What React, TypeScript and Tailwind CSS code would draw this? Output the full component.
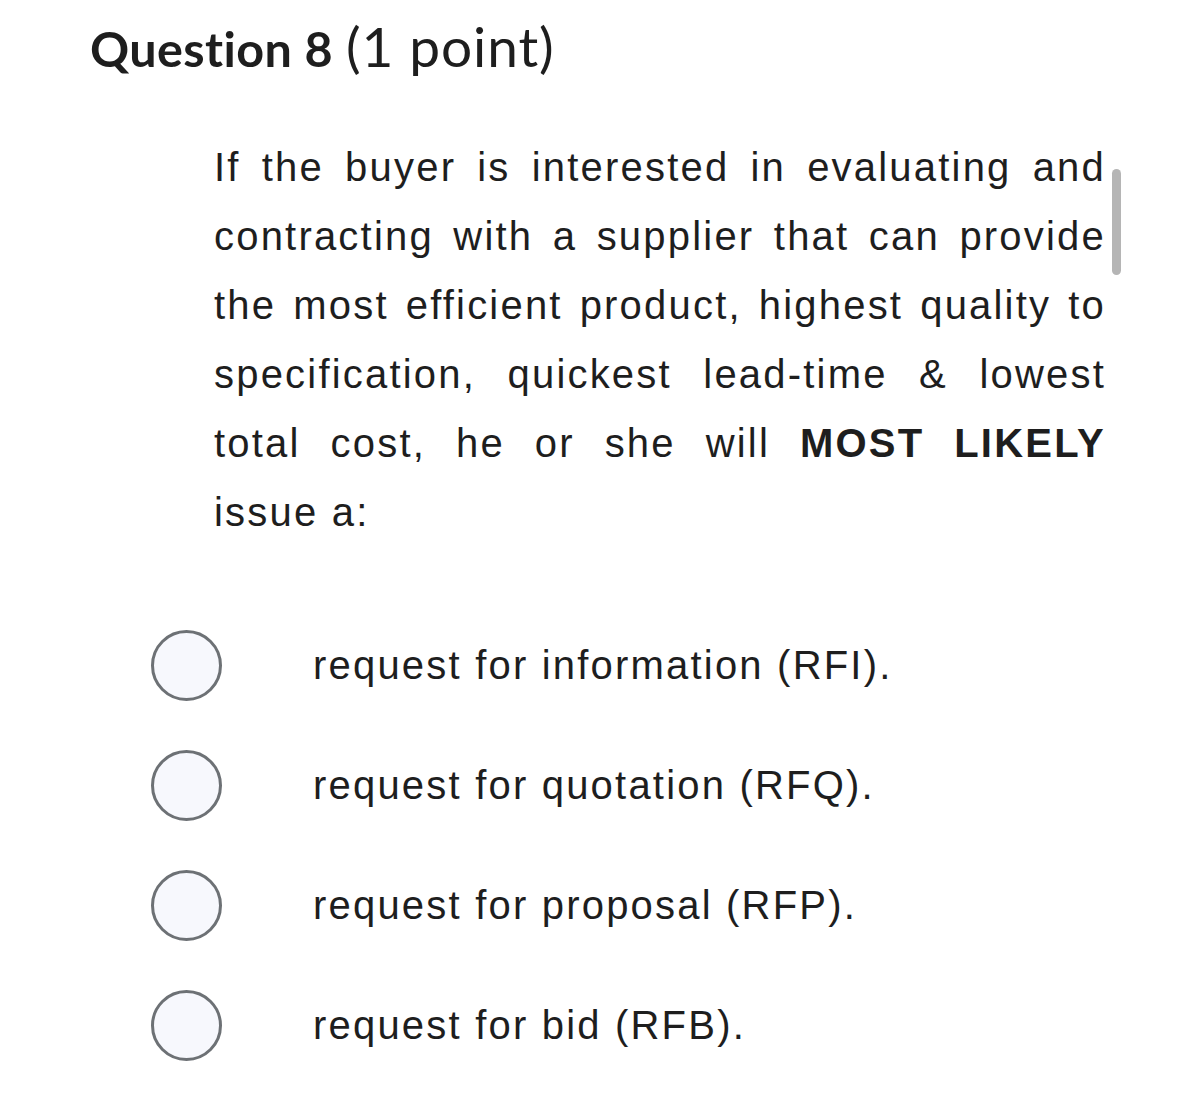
import React from "react";

const lines = [
  "If the buyer is interested in evaluating and",
  "contracting with a supplier that can provide",
  "the most efficient product, highest quality to",
  "specification, quickest lead-time & lowest",
];

const options = [
  "request for information (RFI).",
  "request for quotation (RFQ).",
  "request for proposal (RFP).",
  "request for bid (RFB).",
];

export default function App() {
  return (
    <div className="relative w-[1179px] h-[1116px] bg-white overflow-hidden text-[#1e1e1e]">
      <div className="pl-[90px] pt-[14px] h-[72px] font-['Lato',sans-serif] leading-[64px] whitespace-nowrap">
        <span className="font-bold text-[48.5px] tracking-[0.4px]">Question 8</span>
        <span className="font-normal text-[55px] ml-[13px] tracking-[0.9px]">(1 point)</span>
      </div>

      <div className="relative ml-[214px] mt-[61px] w-[892px] font-['Liberation_Sans',Arial,sans-serif] text-[40px] leading-[69px] tracking-[2.2px]">
        {lines.map((l) => (
          <div key={l} className="text-justify [text-align-last:justify]">
            {l}
          </div>
        ))}
        <div className="text-justify [text-align-last:justify]">
          total cost, he or she will <span className="font-bold">MOST LIKELY</span>
        </div>
        <div>issue a:</div>
        <div className="absolute left-[898px] top-[36px] w-[9px] h-[106px] rounded-full bg-[#b5b5b5]" />
      </div>

      <div className="mt-[58px] flex flex-col">
        {options.map((o) => (
          <div key={o} className="flex items-center h-[120px]">
            <div className="ml-[151px] w-[71px] h-[71px] rounded-full border-[3px] border-[#6d7175] bg-[#f7f8fd]" />
            <div className="ml-[91px] font-['Liberation_Sans',Arial,sans-serif] text-[40px] leading-[48px] tracking-[2.2px]">
              {o}
            </div>
          </div>
        ))}
      </div>
    </div>
  );
}
